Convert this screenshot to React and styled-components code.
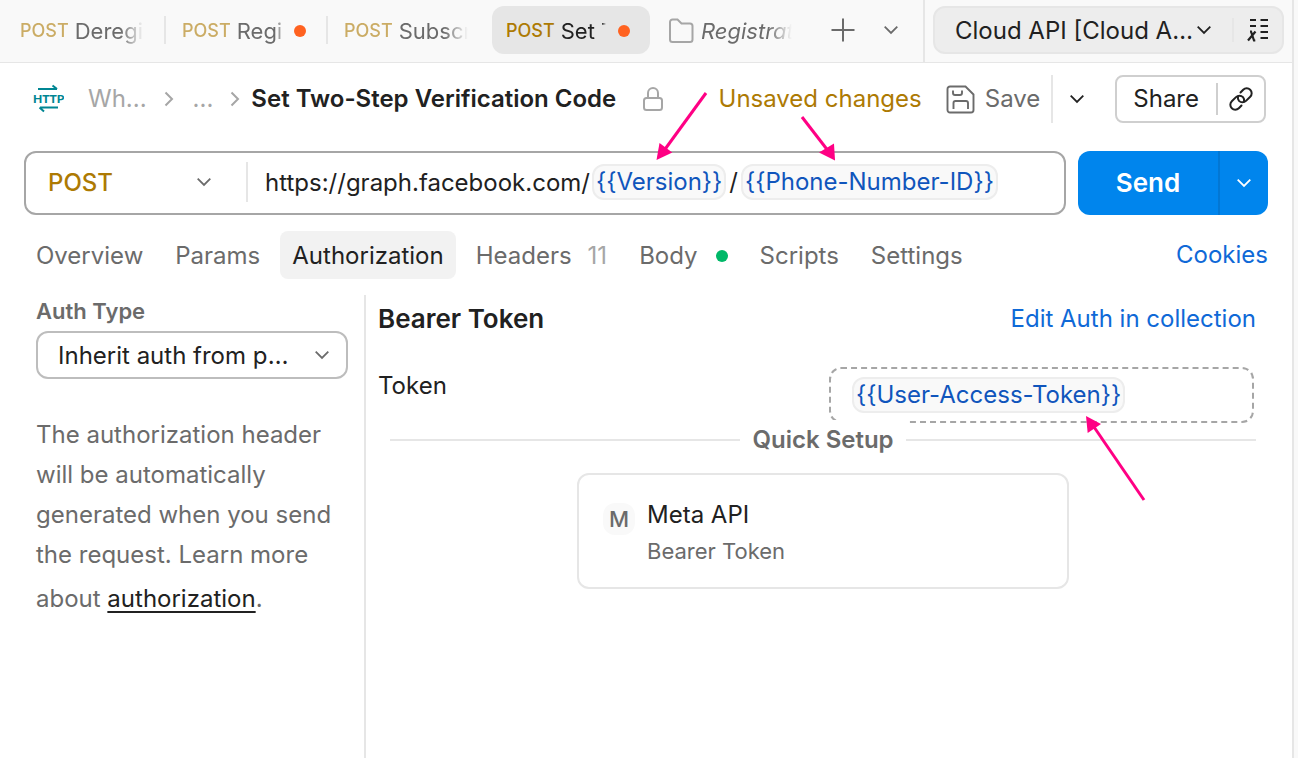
import React from "react";
import styled, { createGlobalStyle, css } from "styled-components";

const color = {
  text: "#212121",
  muted: "#6b6b6b",
  faint: "#a6a6a6",
  line: "#e6e6e6",
  panel: "#f9f9f9",
  amber: "#ad7a03",
  link: "#0f69d7",
  variable: "#1055bc",
  send: "#0085ed",
  orange: "#ff6220",
  green: "#00b868",
  teal: "#008693",
  pink: "#ff0084",
};

const GlobalStyle = createGlobalStyle`
  * { box-sizing: border-box; }
  body {
    margin: 0;
    background: #fff;
    color: ${color.text};
    font: 400 24px/32px Inter, "Liberation Sans", sans-serif;
  }
  button, input, select { font: inherit; color: inherit; }
`;

const bare = css`
  margin: 0;
  padding: 0;
  border: 0;
  background: none;
  outline: none;
`;

const Shell = styled.div`
  display: flex;
  min-height: 100vh;
`;

const Main = styled.main`
  flex: 1;
  min-width: 0;
  display: flex;
  flex-direction: column;
`;

const Gutter = styled.aside`
  flex: none;
  width: 6px;
  border-left: 2px solid ${color.line};
  background: ${color.panel};
`;

const TopBar = styled.header`
  display: flex;
  align-items: stretch;
  height: 63px;
  border-bottom: 1px solid ${color.line};
  background: ${color.panel};
`;

const TabStrip = styled.nav`
  flex: 1;
  min-width: 0;
  display: flex;
  align-items: center;
  padding: 0 0 2px 6px;
`;

const StripTools = styled.div`
  display: flex;
  margin-left: 7px;
`;

const Tab = styled.button`
  ${bare}
  flex: none;
  display: flex;
  align-items: center;
  width: 158px;
  height: 48px;
  padding: 2px 20px 0 14px;
  border-radius: 12px;
  background: ${(p) => (p.$active ? color.line : "transparent")};
  color: ${(p) => (p.$active ? color.text : color.muted)};
  font-size: 22px;
  font-style: ${(p) => (p.$preview ? "italic" : "normal")};
`;

const TabMethod = styled.span`
  margin-right: 6px;
  color: ${color.amber};
  opacity: ${(p) => (p.$dim ? 0.6 : 1)};
  font-size: 18px;
  font-weight: 500;
`;

const TabTitle = styled.span`
  flex: 1;
  min-width: 0;
  overflow: hidden;
  white-space: nowrap;
  text-align: left;
  mask-image: linear-gradient(to left, transparent, #000 ${(p) => (p.$short ? "4px" : "24px")});
`;

const Dot = styled.span`
  flex: none;
  width: 12px;
  height: 12px;
  margin-left: ${(p) => p.$gap || 12}px;
  border-radius: 50%;
  background: ${(p) => p.$color};
`;

const TabDivider = styled.span`
  flex: none;
  width: 2px;
  height: 28px;
  margin: 0 2px 0 0;
  background: ${(p) => (p.$hidden ? "transparent" : color.line)};
`;

const IconButton = styled.button`
  ${bare}
  flex: none;
  display: grid;
  place-items: center;
  width: ${(p) => p.$width || 48}px;
  height: 48px;
  color: ${(p) => p.$color || color.muted};
`;

const EnvArea = styled.div`
  flex: none;
  display: flex;
  align-items: center;
  padding: 0 8px 2px;
  border-left: 2px solid ${color.line};
`;

const EnvBox = styled.div`
  display: flex;
  align-items: center;
  height: 48px;
  border: 2px solid ${color.line};
  border-radius: 12px;
  background: #ededed;
`;

const Divider = styled.span`
  flex: none;
  align-self: center;
  width: 2px;
  height: ${(p) => p.$h}px;
  background: ${(p) => p.$color || color.line};
`;

const SelectWrap = styled.span`
  display: grid;
  align-items: center;
  width: ${(p) => p.$width};
  height: ${(p) => p.$height}px;
  color: ${(p) => p.$color || color.text};

  > select,
  > svg {
    grid-area: 1 / 1;
  }
  > svg {
    justify-self: end;
    margin-right: ${(p) => p.$inset}px;
    color: ${(p) => p.$chevron || color.muted};
    pointer-events: none;
  }
`;

const Select = styled.select`
  ${bare}
  appearance: none;
  width: 100%;
  height: 100%;
  padding: 2px ${(p) => p.$right || 44}px 0 ${(p) => p.$left || 20}px;
  font-weight: ${(p) => p.$weight || 400};
  text-overflow: ellipsis;
  white-space: nowrap;
  overflow: hidden;
`;

const TitleRow = styled.div`
  display: flex;
  align-items: center;
  justify-content: space-between;
  padding: 12px 26px 0 32px;
`;

const Crumbs = styled.nav`
  display: flex;
  align-items: center;
  white-space: nowrap;
`;

const Crumb = styled.a`
  color: ${color.faint};
  text-decoration: none;
`;

const CrumbArrow = styled.span`
  display: grid;
  align-items: center;
  width: ${(p) => (p.$last ? 38 : 46)}px;
  padding-left: 17px;
`;

const PageTitle = styled.h1`
  margin: 0 26px 0 0;
  font-size: 24px;
  line-height: 32px;
  font-weight: 600;
`;

const HttpMark = styled.svg`
  flex: none;
  margin-right: 24px;
`;

const Actions = styled.div`
  display: flex;
  align-items: center;
  white-space: nowrap;
`;

const Unsaved = styled.span`
  margin-right: 24px;
  color: ${color.amber};
`;

const SaveButton = styled.button`
  ${bare}
  display: flex;
  align-items: center;
  gap: 10px;
  height: 48px;
  padding-right: 11px;
  color: ${color.muted};
`;

const ShareGroup = styled.div`
  display: flex;
  align-items: center;
  height: 48px;
  margin-left: 14px;
  border: 2px solid #cfcfcf;
  border-radius: 8px;
`;

const ShareButton = styled.button`
  ${bare}
  height: 44px;
  padding: 0 17px 0 16px;
`;

const RequestRow = styled.form`
  display: flex;
  gap: 12px;
  padding: 28px 24px 0;
`;

const UrlBox = styled.div`
  flex: 1;
  min-width: 0;
  display: flex;
  align-items: center;
  height: 64px;
  padding-bottom: 2px;
  border: 2px solid ${color.faint};
  border-radius: 12px;
`;

const UrlText = styled.input`
  ${bare}
  flex: none;
  field-sizing: content;
  margin: 0 2px 0 17px;
  height: 40px;
`;

const Slash = styled.span`
  margin: 0 3px;
`;

const RestInput = styled.input`
  ${bare}
  flex: 1;
  width: 0;
  min-width: 0;
  height: 40px;
`;

const Pill = styled.span`
  position: relative;
  flex: none;
  height: 36px;
  padding: 0 2px;
  border: 2px solid #ededed;
  border-radius: 12px;
  background: ${color.panel};
  color: ${color.variable};
  font-variant-ligatures: no-contextual;
`;

const Arrow = styled.svg`
  position: absolute;
  left: ${(p) => p.$left}px;
  top: ${(p) => p.$top}px;
  z-index: 3;
  pointer-events: none;
`;

const SendGroup = styled.div`
  flex: none;
  display: flex;
  width: 190px;
  height: 64px;
  border-radius: 12px;
  background: ${color.send};
  color: #fff;
`;

const SendButton = styled.button`
  ${bare}
  flex: 1;
  font-size: 26px;
  font-weight: 600;
`;

const SendMore = styled.button`
  ${bare}
  display: grid;
  place-items: center;
  width: 50px;
  border-left: 2px solid #0277d4;
`;

const SectionRow = styled.div`
  display: flex;
  align-items: center;
  justify-content: space-between;
  padding: 16px 24px 0;
`;

const SectionTabs = styled.nav`
  display: flex;
  gap: 8px;
`;

const SectionTab = styled.button`
  ${bare}
  display: flex;
  align-items: center;
  height: 48px;
  padding: 2px 12px 0;
  border-radius: 8px;
  background: ${(p) => (p.$active ? "#f2f2f2" : "transparent")};
  color: ${(p) => (p.$active ? color.text : color.muted)};
  white-space: nowrap;
`;

const Count = styled.span`
  margin-left: 16px;
  color: ${color.faint};
`;

const Link = styled.a`
  color: ${color.link};
  text-decoration: none;
`;

const Panels = styled.div`
  flex: 1;
  display: flex;
  margin-top: 16px;
`;

const AuthSide = styled.section`
  flex: none;
  width: 366px;
  padding: 0 16px 0 36px;
  border-right: 2px solid ${color.line};
`;

const FieldLabel = styled.label`
  display: block;
  padding-bottom: 4px;
  color: ${color.muted};
  font-size: 22px;
  font-weight: 600;
`;

const AuthSelect = styled.div`
  border: 2px solid #bdbdbd;
  border-radius: 12px;
`;

const Help = styled.p`
  margin: 36px 0 0;
  color: ${color.muted};
  line-height: 40px;
`;

const HelpLink = styled.a`
  display: inline-block;
  padding-top: 4px;
  color: ${color.text};
  text-decoration: underline;
  text-decoration-thickness: 2px;
  text-underline-offset: 4px;
`;

const AuthMain = styled.section`
  flex: 1;
  min-width: 0;
  padding: 8px 36px 0 12px;
`;

const AuthHead = styled.div`
  display: flex;
  align-items: center;
  justify-content: space-between;
`;

const AuthHeading = styled.h2`
  margin: 0;
  font-size: 26px;
  line-height: 32px;
  font-weight: 600;
`;

const TokenRow = styled.div`
  display: flex;
  justify-content: space-between;
  padding: 32px 2px 0 0;
`;

const TokenLabel = styled.label`
  padding-top: 3px;
`;

const TokenField = styled.div`
  flex: 0 1 425px;
  display: flex;
  align-items: center;
  height: 56px;
  padding-left: 21px;
  border: 2px dashed ${color.faint};
  border-radius: 12px;
`;

const QuickSetup = styled.div`
  display: flex;
  align-items: center;
  margin: -3px 0 0 12px;
  color: ${color.muted};
  font-weight: 600;

  &::before,
  &::after {
    content: "";
    flex: 1;
    height: 2px;
    background: ${color.line};
  }
`;

const QuickLabel = styled.span`
  position: relative;
  padding: 0 12px;
  background: #fff;
  line-height: 40px;
`;

const CardWrap = styled.div`
  display: flex;
  justify-content: center;
  padding: 13px 0 0 12px;
`;

const SetupCard = styled.button`
  ${bare}
  flex: 0 1 492px;
  display: flex;
  align-items: flex-start;
  gap: 12px;
  padding: 24px 24px 20px;
  border: 2px solid ${color.line};
  border-radius: 12px;
  text-align: left;
`;

const Initial = styled.span`
  display: grid;
  place-items: center;
  width: 32px;
  height: 32px;
  margin-top: 4px;
  border-radius: 12px;
  background: ${color.panel};
  color: ${color.muted};
  font-size: 22px;
  font-weight: 500;
`;

const CardText = styled.span`
  display: grid;
  gap: 4px;
`;

const CardSub = styled.span`
  color: ${color.muted};
  font-size: 22px;
`;

const Chevron = () => (
  <svg width="14" height="14" viewBox="0 0 14 14" fill="none" stroke="currentColor" strokeWidth="1.8">
    <path d="M0.7 3.7 7 10l6.3-6.3" />
  </svg>
);

const RightChevron = () => (
  <svg width="10" height="16" viewBox="0 0 10 16" fill="none" stroke={color.faint} strokeWidth="2">
    <path d="M1.5 1.5 8 8l-6.5 6.5" />
  </svg>
);

const FolderIcon = () => (
  <svg width="26" height="26" viewBox="0 0 26 26" fill="none" stroke={color.faint} strokeWidth="2">
    <path d="M2 4a2.500 2.500 0 0 1 2.500-2.500H9.500l4 4H22a2.500 2.500 0 0 1 2.500 2.500v13.500a2.500 2.500 0 0 1-2.500 2.500H4.500A2.500 2.500 0 0 1 2 21.500z" />
  </svg>
);

const FolderSlot = styled.span`
  display: grid;
  margin-right: 7px;
`;

const VariablesIcon = () => (
  <svg width="24" height="24" viewBox="0 0 24 24" fill="none" stroke="currentColor" strokeWidth="2">
    <path d="M4 2h6M14.500 2h7.500M4 8h6M14.500 8h7.500M14.500 14h7.500M14.500 20h7.500" />
    <path d="M9.500 13.500 2 22.500M4 13.500h1l3 9h1.300" strokeWidth="2.2" />
  </svg>
);

const LockIcon = () => (
  <svg width="22" height="26" viewBox="0 0 22 26" fill="none" stroke={color.faint} strokeWidth="2">
    <rect x="2" y="12" width="18" height="12" rx="2.5" />
    <path d="M6 12V7a5 5 0 0 1 10 0v5" />
  </svg>
);

const SaveIcon = () => (
  <svg width="29" height="29" viewBox="0 0 29 29" fill="none" stroke="currentColor" strokeWidth="1.9">
    <path d="M4 1.500h15.500l8 8V25a2.500 2.500 0 0 1-2.500 2.500H4A2.500 2.500 0 0 1 1.500 25V4A2.500 2.500 0 0 1 4 1.500z" />
    <path d="M7 5.500v2.500a2 2 0 0 0 2 2h5a2 2 0 0 0 2-2V5.500M7.500 24v-6a2 2 0 0 1 2-2h10.500a2 2 0 0 1 2 2v6" />
  </svg>
);

const LinkIcon = () => (
  <svg width="26" height="26" viewBox="0 0 26 26" fill="none" stroke="currentColor" strokeWidth="2" strokeLinecap="round">
    <path d="M12.500 6.500 15.200 3.700a4.900 4.900 0 0 1 7 0 4.900 4.900 0 0 1 0 7l-4.200 4.200a4.900 4.900 0 0 1-7 0 4.900 4.900 0 0 1-1-4.200" />
    <path d="M13.500 19.500 10.800 22.300a4.900 4.900 0 0 1-7 0 4.900 4.900 0 0 1 0-7l4.200-4.200a4.900 4.900 0 0 1 7 0 4.900 4.900 0 0 1 1 4.200" />
  </svg>
);

const MethodTab = ({ title, active, dirty }) => (
  <Tab type="button" $active={active}>
    <TabMethod $dim={!active}>POST</TabMethod>
    <TabTitle $short={dirty}>{title}</TabTitle>
    {dirty && <Dot $color={color.orange} />}
  </Tab>
);

export default function App() {
  return (
    <Shell>
      <GlobalStyle />
      <Main>
        <TopBar>
          <TabStrip aria-label="Open requests">
            <MethodTab title="Deregister" />
            <TabDivider />
            <MethodTab title="Register" dirty />
            <TabDivider />
            <MethodTab title="Subscribe" />
            <TabDivider $hidden />
            <MethodTab title="Set Two-Step" active dirty />
            <TabDivider $hidden />
            <Tab type="button" $preview>
              <FolderSlot><FolderIcon /></FolderSlot>
              <TabTitle>Registration</TabTitle>
            </Tab>
            <StripTools>
              <IconButton type="button" aria-label="New tab">
                <svg width="24" height="24" viewBox="0 0 24 24" stroke="currentColor" strokeWidth="2">
                  <path d="M12 0.500v23M0.500 12h23" />
                </svg>
              </IconButton>
              <IconButton type="button" aria-label="Tab list"><Chevron /></IconButton>
            </StripTools>
          </TabStrip>
          <EnvArea>
            <EnvBox>
              <SelectWrap $width="297px" $height={44} $inset={21} $chevron={color.text}>
                <Select aria-label="Environment" $right={30} defaultValue="cloud">
                  <option value="cloud">Cloud API [Cloud API]</option>
                </Select>
                <Chevron />
              </SelectWrap>
              <Divider $h={24} />
              <IconButton type="button" aria-label="Variables" $color={color.text}>
                <VariablesIcon />
              </IconButton>
            </EnvBox>
          </EnvArea>
        </TopBar>

        <TitleRow>
          <Crumbs aria-label="Breadcrumb">
            <HttpMark width="32" height="30" viewBox="0 0 32 30" aria-hidden="true">
              <path d="M6 5h19M20.500 1.500 25 5M26 23.500H8M12 27.500l-4.500-4" fill="none" stroke={color.teal} strokeWidth="2" />
              <text x="1" y="19" fill={color.teal} fontFamily="Lato, sans-serif" fontWeight="900" fontSize="12">HTTP</text>
            </HttpMark>
            <Crumb href="#collection">Wh...</Crumb>
            <CrumbArrow><RightChevron /></CrumbArrow>
            <Crumb href="#folder">...</Crumb>
            <CrumbArrow $last><RightChevron /></CrumbArrow>
            <PageTitle>Set Two-Step Verification Code</PageTitle>
            <LockIcon />
          </Crumbs>
          <Actions>
            <Unsaved>Unsaved changes</Unsaved>
            <SaveButton type="button"><SaveIcon />Save</SaveButton>
            <Divider $h={48} />
            <IconButton type="button" aria-label="Save options" $color={color.text}><Chevron /></IconButton>
            <ShareGroup>
              <ShareButton type="button">Share</ShareButton>
              <Divider $h={32} $color="#cfcfcf" />
              <IconButton type="button" aria-label="Copy link" $width={46} $color={color.text}><LinkIcon /></IconButton>
            </ShareGroup>
          </Actions>
        </TitleRow>

        <RequestRow onSubmit={(e) => e.preventDefault()}>
          <UrlBox>
            <SelectWrap $width="220px" $height={56} $inset={35} $color={color.amber}>
              <Select aria-label="Method" $left={22} $weight={500} defaultValue="POST">
                <option>POST</option>
                <option>GET</option>
              </Select>
              <Chevron />
            </SelectWrap>
            <Divider $h={40} />
            <UrlText aria-label="Request URL" defaultValue="https://graph.facebook.com/" />
            <Pill>
              {"{{Version}}"}
              <Arrow $left={58} $top={-76} width="60" height="76" viewBox="0 0 60 76">
                <path d="M54 3 11 62" stroke={color.pink} strokeWidth="3" />
                <path d="M4.500 70 7.500 53l12.800 9.500z" fill={color.pink} />
              </Arrow>
            </Pill>
            <Slash>/</Slash>
            <Pill>
              {"{{Phone-Number-ID}}"}
              <Arrow $left={56} $top={-52} width="42" height="52" viewBox="0 0 42 52">
                <path d="M3 3l27 35" stroke={color.pink} strokeWidth="3" />
                <path d="M36 46.500 20 38.500 35 29.500z" fill={color.pink} />
              </Arrow>
            </Pill>
            <RestInput aria-label="Rest of the URL" />
          </UrlBox>
          <SendGroup>
            <SendButton type="submit">Send</SendButton>
            <SendMore type="button" aria-label="Send options"><Chevron /></SendMore>
          </SendGroup>
        </RequestRow>

        <SectionRow>
          <SectionTabs aria-label="Request sections">
            <SectionTab type="button">Overview</SectionTab>
            <SectionTab type="button">Params</SectionTab>
            <SectionTab type="button" $active>Authorization</SectionTab>
            <SectionTab type="button">Headers<Count>11</Count></SectionTab>
            <SectionTab type="button">Body<Dot $gap={18} $color={color.green} /></SectionTab>
            <SectionTab type="button">Scripts</SectionTab>
            <SectionTab type="button">Settings</SectionTab>
          </SectionTabs>
          <Link href="#cookies">Cookies</Link>
        </SectionRow>

        <Panels>
          <AuthSide>
            <FieldLabel htmlFor="auth-type">Auth Type</FieldLabel>
            <AuthSelect>
              <SelectWrap $width="100%" $height={44} $inset={17}>
                <Select id="auth-type" $right={52} defaultValue="inherit">
                  <option value="inherit">Inherit auth from parent</option>
                </Select>
                <Chevron />
              </SelectWrap>
            </AuthSelect>
            <Help>
              The authorization header will be automatically generated when you send the request. Learn more about{" "}
              <HelpLink href="#authorization">authorization</HelpLink>.
            </Help>
          </AuthSide>
          <AuthMain>
            <AuthHead>
              <AuthHeading>Bearer Token</AuthHeading>
              <Link href="#collection-auth">Edit Auth in collection</Link>
            </AuthHead>
            <TokenRow>
              <TokenLabel htmlFor="token">Token</TokenLabel>
              <TokenField>
                <Pill>
                  {"{{User-Access-Token}}"}
                  <Arrow $left={230} $top={35} width="64" height="90" viewBox="0 0 64 90">
                    <path d="M60 86 10 13" stroke={color.pink} strokeWidth="3" />
                    <path d="M2 2l15 8L3.700 19z" fill={color.pink} />
                  </Arrow>
                </Pill>
                <RestInput id="token" />
              </TokenField>
            </TokenRow>
            <QuickSetup><QuickLabel>Quick Setup</QuickLabel></QuickSetup>
            <CardWrap>
              <SetupCard type="button">
                <Initial>M</Initial>
                <CardText>
                  <span>Meta API</span>
                  <CardSub>Bearer Token</CardSub>
                </CardText>
              </SetupCard>
            </CardWrap>
          </AuthMain>
        </Panels>
      </Main>
      <Gutter />
    </Shell>
  );
}
